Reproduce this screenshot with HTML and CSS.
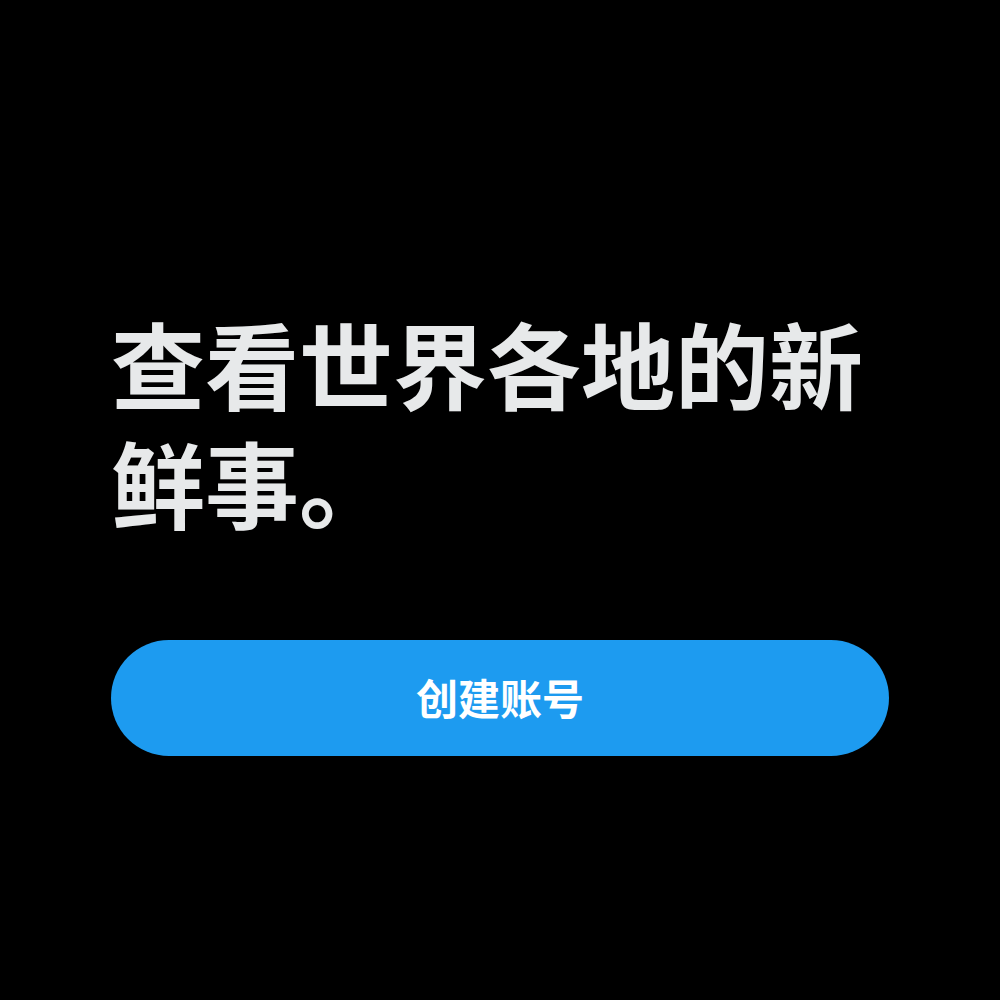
FILE: index.html
```html
<!DOCTYPE html>
<html lang="zh-CN">
<head>
<meta charset="utf-8">
<link rel="stylesheet" href="styles.css">
</head>
<body>
<main class="page">
  <h1 class="headline">查看世界各地的新鲜事。</h1>
  <button class="cta">创建账号</button>
</main>
</body>
</html>
```
FILE: styles.css
```css
html, body {
  margin: 0;
  padding: 0;
  background: #000;
}
body {
  width: 1000px;
  height: 1000px;
  font-family: "Noto Sans CJK SC", "Noto Sans", sans-serif;
}
.page {
  display: flex;
  flex-direction: column;
  padding: 303px 111px 0 111px;
}
.headline {
  margin: 0;
  color: #e7e9ea;
  font-size: 94px;
  line-height: 119px;
  font-weight: 700;
  letter-spacing: 0;
  width: 778px;
}
.cta {
  margin-top: 99px;
  height: 116px;
  width: 778px;
  border: none;
  border-radius: 58px;
  background: #1d9bf0;
  color: #fff;
  font-family: "Noto Sans CJK SC", "Noto Sans", sans-serif;
  font-size: 42px;
  font-weight: 700;
  padding: 0 0 4px 0;
}
```
